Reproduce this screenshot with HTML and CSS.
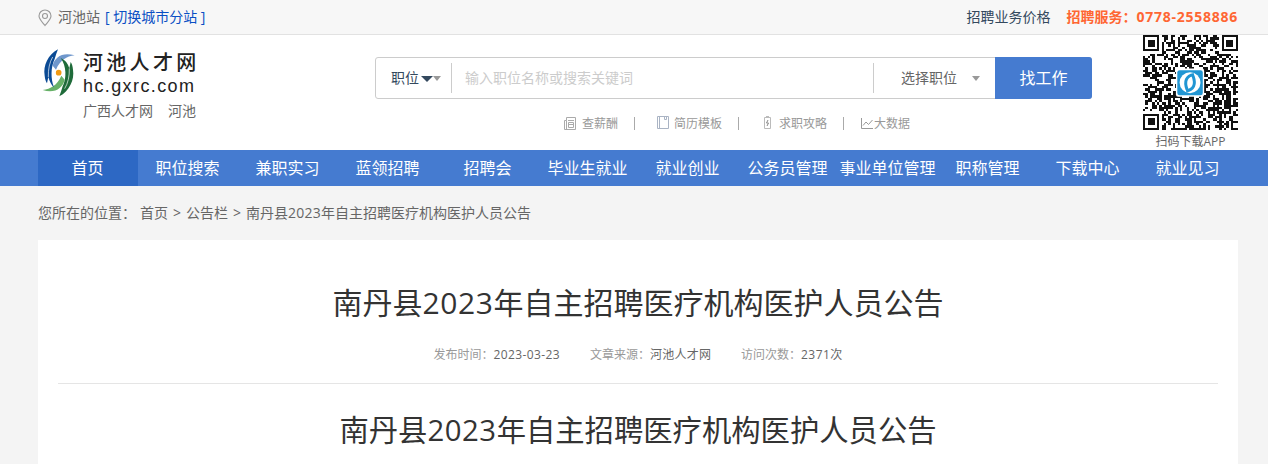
FILE: index.html
```html
<!DOCTYPE html>
<html lang="zh-CN">
<head>
    <meta charset="UTF-8">
    <title>南丹县2023年自主招聘医疗机构医护人员公告</title>
    <link rel="stylesheet" href="styles.css">
</head>
<body>

    <div class="topbar">
        <div class="wrap topbar-inner">
            <div class="site">
                <svg class="pin" width="14" height="18" viewBox="0 0 14 18" fill="none" stroke="#999" stroke-width="1.1">
                    <path d="M7 16.500C4.500 13.300 1 10.200 1 7a6 6 0 0 1 12 0c0 3.200-3.500 6.300-6 9.500z"/>
                    <circle cx="7" cy="7" r="2.500"/>
                </svg>
                <span>河池站</span>
                <a class="switch" href="#">[ 切换城市分站 ]</a>
            </div>
            <div class="service">
                <a href="#">招聘业务价格</a>
                <strong>招聘服务：<span class="phone">0778-2558886</span></strong>
            </div>
        </div>
    </div>

    <div class="header">
        <div class="wrap header-inner">
            <div class="logo">
                <svg class="logo-mark" width="34" height="48" viewBox="34 38 102 144">
                    <path fill="#6f97cc" d="M66 88C72 62 96 46 132 57C108 60 88 72 76 100z"/>
                    <path fill="#67b168" d="M102 130C96 156 72 172 36 161C60 158 80 146 92 118z"/>
                    <path fill="#0b4a94" d="M82 39C52 55 37 88 42 118C43 128 45 135 49 141L53 122C57 136 62 146 70 153C60 128 60 92 72 68C75 58 78 48 82 39z"/>
                    <path fill="#1f6b3a" d="M86 180C116 164 132 130 127 100C126 90 124 83 120 77L116 96C112 82 105 72 90 65C108 90 108 126 96 150C93 160 90 170 86 180z"/>
                    <path fill="none" stroke="#fff" stroke-width="2" d="M66 62Q52 86 53 122M102 157Q117 132 116 96"/>
                    <circle cx="84" cy="109" r="8.500" fill="#f29a12"/>
                </svg>
                <div class="logo-text">
                    <div class="logo-cn">河池人才网</div>
                    <div class="logo-en">hc.gxrc.com</div>
                    <div class="logo-sub"><span>广西人才网</span><span>河池</span></div>
                </div>
            </div>

            <div class="search">
                <div class="search-box">
                    <div class="search-type">职位<i class="caret dark"></i><i class="caret"></i></div>
                    <div class="search-input">输入职位名称或搜索关键词</div>
                    <div class="search-job">选择职位<i class="caret"></i></div>
                    <button class="search-btn">找工作</button>
                </div>
                <div class="tools">
                    <a class="tool-pay" href="#"><svg width="13" height="15" viewBox="0 0 13 15" fill="none" stroke="#aaa"><path d="M3.500 1.500h9v12h-11v-9h2zM3.500 4.500v9M5 4.500h6M5.500 6.500h5v5h-5zM5.500 8.500h5"/></svg>查薪酬</a>
                    <i class="bar"></i>
                    <a class="tool-resume" href="#"><svg width="12" height="14" viewBox="0 0 12 14" fill="none" stroke="#aab4c4"><path d="M.5.500h11v12H.5zM2.500.500v12M7.500.500v3h2v-3"/></svg>简历模板</a>
                    <i class="bar"></i>
                    <a class="tool-guide" href="#"><svg width="8" height="14" viewBox="0 0 8 14" fill="none" stroke="#bbb"><path d="M.5 1.500h6v11h-6zM2 .5h3"/><path stroke="#888" d="M4 4L2.500 7h2L3 10"/></svg>求职攻略</a>
                    <i class="bar"></i>
                    <a class="tool-data" href="#"><svg width="14" height="13" viewBox="0 0 14 13" fill="none" stroke="#999"><path d="M1.500 1v10.500H13M3 8.500L6 5l2.500 2.500L12.500 3"/></svg>大数据</a>
                </div>
            </div>

            <div class="qr">
                <svg id="qrcode" width="95" height="95" viewBox="0 0 41 41"></svg>
                <div class="qr-text">扫码下载APP</div>
            </div>
        </div>
    </div>

    <div class="nav">
        <div class="wrap nav-inner">
            <a class="active" href="#">首页</a>
            <a href="#">职位搜索</a>
            <a href="#">兼职实习</a>
            <a href="#">蓝领招聘</a>
            <a href="#">招聘会</a>
            <a href="#">毕业生就业</a>
            <a href="#">就业创业</a>
            <a href="#">公务员管理</a>
            <a href="#">事业单位管理</a>
            <a href="#">职称管理</a>
            <a href="#">下载中心</a>
            <a href="#">就业见习</a>
        </div>
    </div>

    <div class="wrap crumbs">
        <span class="crumbs-label">您所在的位置：</span><a href="#">首页</a><i>&gt;</i><a href="#">公告栏</a><i>&gt;</i><span>南丹县<span class="year">2023</span>年自主招聘医疗机构医护人员公告</span>
    </div>

    <div class="wrap article">
        <h1>南丹县<span class="year">2023</span>年自主招聘医疗机构医护人员公告</h1>
        <div class="meta">
            <span>发布时间：<b>2023-03-23</b></span>
            <span>文章来源：<b class="cn">河池人才网</b></span>
            <span>访问次数：<b>2371次</b></span>
        </div>
        <h2>南丹县<span class="year">2023</span>年自主招聘医疗机构医护人员公告</h2>
    </div>

    <script src="qr.js"></script>
</body>
</html>
```
FILE: styles.css
```css
body {
    margin: 0;
    height: 464px;
    overflow: hidden;
    background: #f4f4f4;
    color: #666;
    font-family: "Open Sans", "Noto Sans CJK SC", sans-serif;
    font-size: 14px;
}
a {
    color: inherit;
    text-decoration: none;
}
i, b {
    font-style: normal;
    font-weight: normal;
}
.wrap {
    width: 1200px;
    margin-left: 38px;
}
.year {
    letter-spacing: 0.018em;
}

/* top bar */
.topbar {
    height: 34px;
    background: #f7f7f7;
    border-bottom: 1px solid #e2e2e2;
    line-height: 34px;
}
.topbar-inner, .site, .service {
    display: flex;
}
.topbar-inner {
    justify-content: space-between;
}
.site {
    align-items: center;
    height: 34px;
}
.pin {
    margin: 2px 6px 0 0;
}
.switch {
    margin-left: 5px;
    color: #0a4fc4;
}
.service {
    gap: 16px;
    color: #34495e;
}
.service strong {
    color: #ff6633;
}
.phone {
    letter-spacing: 0.750px;
}

/* header */
.header {
    height: 115px;
    background: #fff;
}
.header-inner {
    display: flex;
}
.logo {
    display: flex;
    width: 337px;
    padding-top: 13px;
}
.logo-mark {
    margin: 1px 7px 0 4px;
}
.logo-cn {
    height: 30px;
    line-height: 30px;
    font-size: 20px;
    font-weight: 500;
    letter-spacing: 3.300px;
    font-style: oblique 8deg;
    color: #222;
}
.logo-en {
    height: 20px;
    line-height: 16px;
    font-family: "Liberation Sans", Arial, sans-serif;
    font-size: 18px;
    letter-spacing: 1.400px;
    color: #222;
}
.logo-sub {
    display: flex;
    gap: 15px;
    line-height: 26px;
}
.search {
    width: 717px;
    padding-top: 22px;
}
.search-box {
    display: flex;
    box-sizing: border-box;
    height: 42px;
    border: 1px solid #ccc;
    border-radius: 3px;
    line-height: 40px;
}
.search-type {
    display: flex;
    align-items: center;
    width: 60px;
    padding-left: 15px;
    color: #34495e;
}
.search-input {
    flex: 1;
    height: 30px;
    margin-top: 5px;
    padding-left: 13px;
    border: solid #ccc;
    border-width: 0 1px;
    line-height: 30px;
    color: #ccc;
}
.search-job {
    display: flex;
    align-items: center;
    width: 94px;
    padding-left: 27px;
}
.search-job .caret {
    margin-left: 15px;
}
.caret {
    border: solid transparent;
    border-top-color: #999;
    border-width: 5px 4.500px 0;
}
.caret.dark {
    border-top-color: #34495e;
    border-width: 6px 6px 0;
    margin: 2px 0 0 2px;
}
.search-btn {
    width: 97px;
    height: 42px;
    margin: -1px -1px 0 0;
    padding: 0;
    border: 0;
    border-radius: 0 3px 3px 0;
    background: #457bd0;
    color: #fff;
    font: inherit;
    font-size: 16px;
}
.tools {
    display: flex;
    align-items: center;
    height: 20px;
    padding: 14px 0 0 188px;
    font-size: 12px;
    color: #999;
}
.tools a {
    display: flex;
    align-items: center;
}
.tools svg {
    margin-right: 5px;
}
.tools .tool-pay svg {
    margin-right: 6px;
}
.tools .tool-guide svg {
    margin: 0 7px 0 3px;
}
.tools .tool-data svg {
    margin-right: 0;
}
.bar {
    width: 1px;
    height: 13px;
    margin: 0 22px 0 16px;
    background: #aaa;
}
.tool-guide + .bar {
    margin-right: 16px;
}
.qr {
    width: 95px;
    margin-left: 51px;
    text-align: center;
    font-size: 12px;
}
.qr svg {
    display: block;
}
.qr-text {
    line-height: 23px;
}

/* nav */
.nav {
    height: 36px;
    background: #457bd0;
}
.nav-inner {
    display: flex;
}
.nav a {
    box-sizing: border-box;
    width: 100px;
    padding-right: 1px;
    line-height: 36px;
    text-align: center;
    white-space: nowrap;
    font-size: 16px;
    color: #fff;
}
.nav .active {
    background: #2d68c4;
}

/* article */
.crumbs {
    height: 54px;
    line-height: 54px;
}
.crumbs-label {
    margin-right: 4px;
}
.crumbs i {
    margin: 0 5px;
}
.article {
    height: 224px;
    box-sizing: border-box;
    padding: 0 20px;
    background: #fff;
    text-align: center;
}
h1, h2 {
    margin: 0;
    font-weight: normal;
    color: #333;
}
h1 {
    padding-top: 40px;
    font-size: 30px;
    line-height: 46px;
}
.meta {
    display: flex;
    justify-content: center;
    gap: 30px;
    height: 56px;
    padding-top: 1px;
    border-bottom: 1px solid #e5e5e5;
    line-height: 55px;
    font-size: 12px;
    color: #999;
}
.meta b {
    color: #666;
    letter-spacing: 0.400px;
}
.meta .cn {
    letter-spacing: 0.200px;
}
h2 {
    padding-top: 23px;
    font-size: 29.330px;
    line-height: 46px;
}
```
FILE: qr.js
```js
var size = 41;
var svg = document.getElementById('qrcode');
var path = '';
var seed = 11;

function inFinder(x, y) {
    return (x < 8 && y < 8) || (x > size - 9 && y < 8) || (x < 8 && y > size - 9);
}

for (var y = 0; y < size; y++) {
    for (var x = 0; x < size; x++) {
        seed = (seed * 16807) % 2147483647;
        if (!inFinder(x, y) && seed / 2147483647 < 0.52) {
            path += 'M' + x + ' ' + y + 'h1v1h-1z';
        }
    }
}

// finder squares in three corners
[[0, 0], [size - 7, 0], [0, size - 7]].forEach(function(p) {
    path += 'M' + p[0] + ' ' + p[1] + 'h7v7h-7zm1 1v5h5v-5zm1 1h3v3h-3z';
});

svg.innerHTML = '<path fill="#111" shape-rendering="crispEdges" d="' + path + '"/>' +
    '<rect x="14.200" y="14.500" width="12.200" height="12.200" rx="1" fill="#fff"/>' +
    '<rect x="14.800" y="15.200" width="11" height="10.800" rx="1" fill="#2196d3"/>' +
    '<circle cx="20.300" cy="20.600" r="4.500" fill="#fff"/>' +
    '<path d="M22 17q-5 1-3 6.500M18.600 24.200q5-1 3-6.500" fill="none" stroke="#2196d3" stroke-width="1.300"/>';
```
